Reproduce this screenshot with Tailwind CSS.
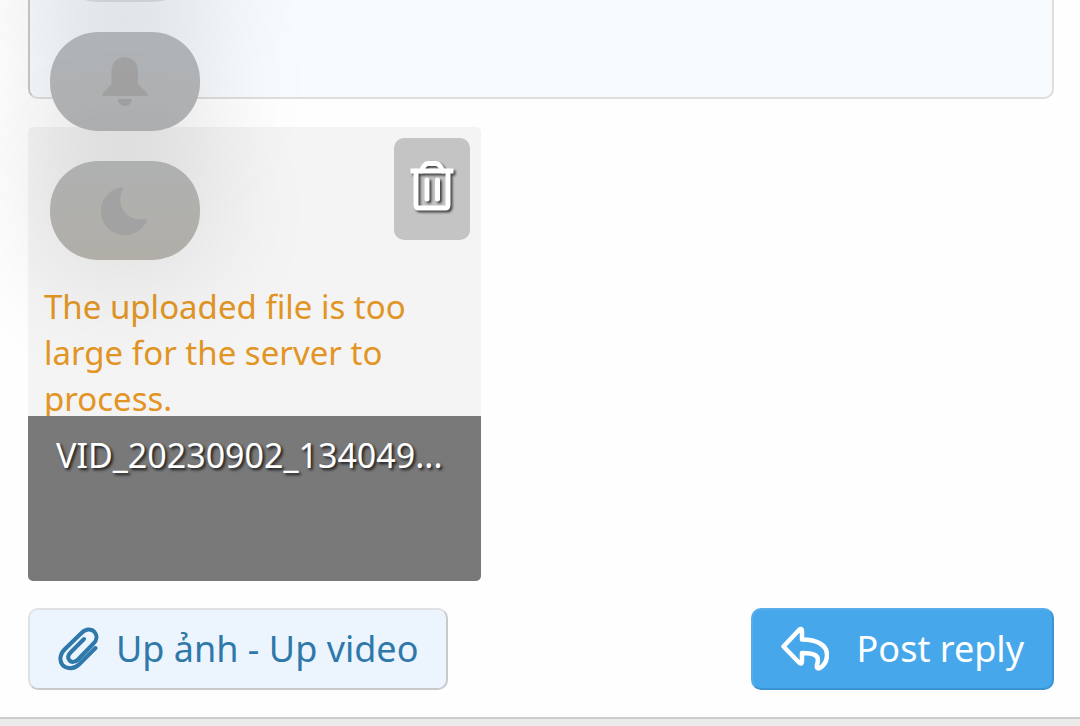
<!DOCTYPE html>
<html lang="vi">
<head>
<meta charset="utf-8">
<meta name="viewport" content="width=device-width, initial-scale=1">
<title>Post reply</title>
<script src="https://cdn.jsdelivr.net/npm/@tailwindcss/browser@4"></script>
</head>
<body class="relative flex min-h-screen flex-col overflow-hidden bg-[#ebebeb] font-['Noto_Sans',sans-serif]">
<form class="mb-[7px] flex grow flex-col border-b-2 border-[#cdcdcd] bg-[#fefefe] pr-[26px] pb-[27px] pl-7">
  <textarea aria-label="Message" class="block h-[99px] w-full resize-none rounded-b-[10px] border-2 border-t-0 border-[#dedede] border-l-[#c9c9c9] bg-[#f7fbfe] p-4 outline-none"></textarea>

  <!-- Attachment that failed to upload -->
  <section class="relative mt-7 w-[453px] max-w-full overflow-hidden rounded-[5px] bg-[#f4f4f4]">
    <button type="button" aria-label="Delete" class="absolute top-[11px] right-[11px] flex h-[102px] w-[76px] items-center justify-center rounded-[10px] bg-[#c4c4c4] pb-1">
      <svg class="h-[54px] w-12 overflow-visible drop-shadow-[2px_2px_1px_rgba(0,0,0,0.65)]" viewBox="0 0 48 54" fill="none" stroke="#fff" stroke-linecap="round" stroke-linejoin="round">
        <path d="M5 11H43" stroke-width="5" stroke-linecap="square"/>
        <path d="M8 11V45Q8 48 11 48H37Q40 48 40 45V11" stroke-width="5"/>
        <path d="M13 11L16 6Q18 3.500 20 3.500H28Q30 3.500 32 6L35 11" stroke-width="5"/>
        <path d="M19 20V39M29.500 20V39" stroke-width="5"/>
      </svg>
    </button>
    <p class="h-[289px] px-4 pt-[157px] text-[33px] leading-[46px] text-[#e29525]">The uploaded file is too large for the server to process.</p>
    <div class="relative h-[165px] bg-[#797979] px-7 pt-4 text-white">
      <div class="truncate text-[34px] leading-[46px] [text-shadow:2px_2px_3px_rgba(0,0,0,0.8)]">VID_20230902_134049...</div>
    </div>
  </section>

  <div class="mt-auto flex items-center justify-between pt-[27px]">
    <button type="button" class="flex h-[82px] items-center gap-4 rounded-[10px] border-2 border-[#dfe1e3] border-r-[#c8cacc] border-b-[#c8cacc] bg-[#ecf5fe] px-7 text-[36px] text-[#2f78aa]">
      <svg class="h-11 w-[42px]" viewBox="0 0 42 44" fill="none" stroke="currentColor" stroke-width="4" stroke-linecap="round" stroke-linejoin="round">
        <path d="M37.500 21L21 37.500C16 42.500 8 42 4.500 38C1 33.500 2 27 6.500 22.500L24 5.500C28 1.500 33.500 1.500 36.500 5C39.500 8.500 39 13 35.500 16.500L20 32.500C17 35.500 13.500 35.500 11.500 33.500C9.500 31 10 28 12.500 25.500L26 12"/>
      </svg>
      <span>Up ảnh - Up video</span>
    </button>
    <button type="submit" class="flex h-[82px] items-center gap-7 rounded-[10px] border-2 border-[#58aeea] border-r-[#3b93d2] border-b-[#3b93d2] bg-[#47a7eb] px-7 text-[36px] text-white">
      <svg class="h-12 w-12" viewBox="0 0 48 48" fill="none" stroke="currentColor" stroke-width="4.500" stroke-linecap="round" stroke-linejoin="round">
        <path d="M2.500 21.500L18 5Q21 2.500 21 6.500V14.500C36 14.500 46 20 46 30C46 37 42 41 39 43Q35 44.500 36 40C39 31 35 28 21 28V36Q21 40 18 37.500Z"/>
      </svg>
      <span>Post reply</span>
    </button>
  </div>
</form>

<!-- Floating shortcuts -->
<nav aria-label="Shortcuts" class="absolute -top-[97px] left-[50px] flex flex-col gap-[30px] text-[#a2a2a2]">
  <button type="button" aria-label="Back to top" class="h-[99px] w-[150px] rounded-[48px] bg-[#d4d8db] shadow-[0_0_120px_10px_rgba(0,0,0,0.12)]"></button>
  <button type="button" aria-label="Notifications" class="relative flex h-[99px] w-[150px] items-center justify-center rounded-[48px] bg-linear-to-b from-[#afb3b6] to-[#b2b3b4] shadow-[0_0_120px_10px_rgba(0,0,0,0.12)]">
    <svg class="h-[50px] w-12" viewBox="0 0 48 50" fill="currentColor"><path d="M10.500 14C10.500 5 17 0 23.500 0S37 5 37 14V27L46 36Q48 39 45 39H3Q0 39 2 36L10.500 27ZM16.500 42H31Q30 49 24 49T16.500 42Z"/></svg>
  </button>
  <button type="button" aria-label="Dark mode" class="relative flex h-[99px] w-[150px] items-center justify-center rounded-[48px] bg-linear-to-b from-[#afb1b1] to-[#b1aea8] shadow-[0_0_120px_10px_rgba(0,0,0,0.12)]">
    <svg class="h-[50px] w-12" viewBox="0 0 48 50" fill="currentColor"><path d="M21.500 3.500C15 17 23 36 44 33Q47 32.500 45.500 35.500A24 24 0 1 1 19.500 1.500Q23 1 21.500 3.500Z"/></svg>
  </button>
</nav>
</body>
</html>
